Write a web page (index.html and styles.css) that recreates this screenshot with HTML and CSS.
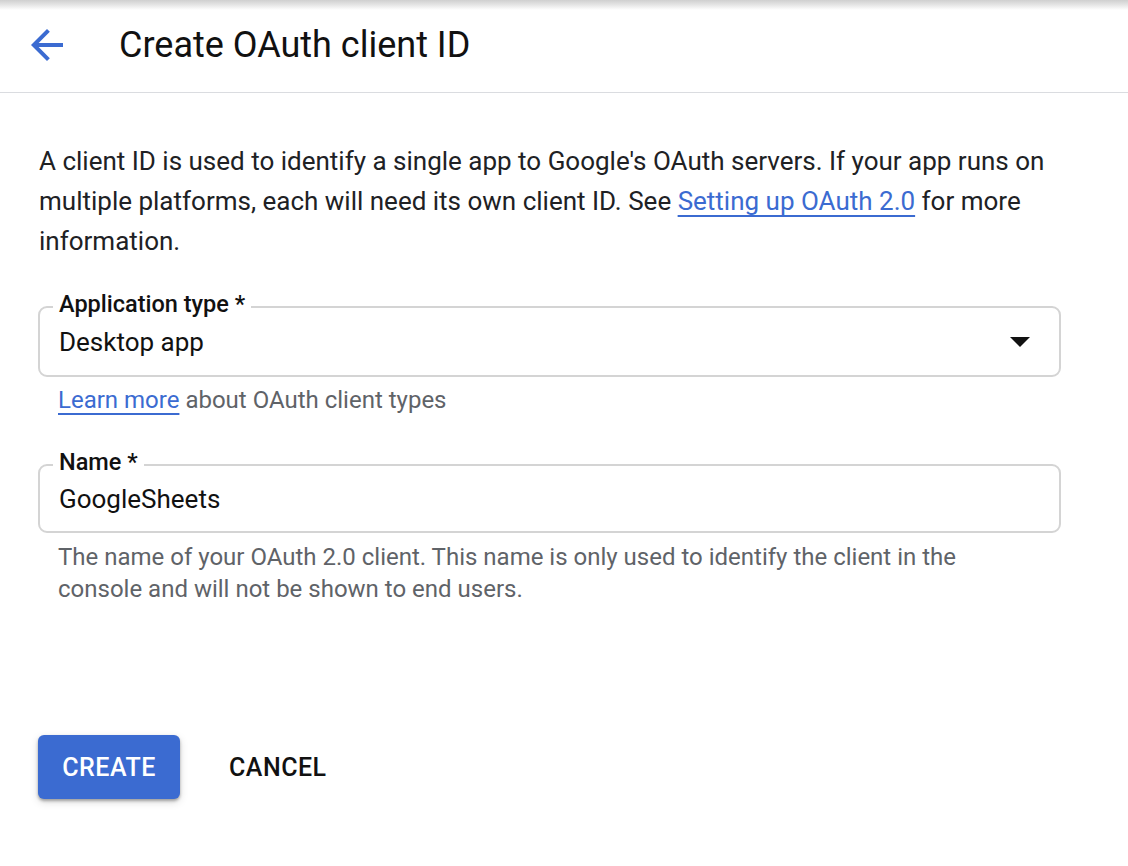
FILE: index.html
```html
<!DOCTYPE html>
<html lang="en">
<head>
<meta charset="utf-8">
<title>Create OAuth client ID</title>
<link rel="stylesheet" href="styles.css">
</head>
<body>
<div class="topshadow"></div>
<header class="header">
  <svg class="back" viewBox="0 0 24 24" width="48" height="48" aria-hidden="true"><path d="M20 11H7.83l5.59-5.59L12 4l-8 8 8 8 1.41-1.41L7.83 13H20v-2z"/></svg>
  <h1 class="title">Create OAuth client ID</h1>
</header>
<main class="content">
  <p class="intro">A client ID is used to identify a single app to Google's OAuth servers. If your app runs on multiple platforms, each will need its own client ID. See <a class="link" href="#">Setting up OAuth 2.0</a> for more information.</p>

  <div class="field field-select">
    <span class="label">Application type *</span>
    <span class="value">Desktop app</span>
    <span class="caret"></span>
  </div>
  <p class="hint hint-link"><a class="link" href="#">Learn more</a> about OAuth client types</p>

  <div class="field field-name">
    <span class="label">Name *</span>
    <span class="value">GoogleSheets</span>
  </div>
  <p class="hint hint-help">The name of your OAuth 2.0 client. This name is only used to identify the client in the console and will not be shown to end users.</p>

  <div class="actions">
    <button class="btn btn-primary">Create</button>
    <button class="btn btn-text">Cancel</button>
  </div>
</main>
</body>
</html>
```
FILE: styles.css
```css
* { box-sizing: border-box; }
html, body { margin: 0; padding: 0; background: #fff; }
body {
  font-family: Roboto, "Liberation Sans", Arial, sans-serif;
  color: #202124;
  width: 1128px;
  height: 866px;
  overflow: hidden;
}
.topshadow {
  height: 10px;
  background: linear-gradient(#cfcfcf, #e6e6e6 50%, #fff);
}
.header {
  height: 83px;
  border-bottom: 1px solid #dadce0;
  display: flex;
  align-items: center;
  padding-left: 23px;
}
.back {
  fill: #3b6bd1;
  margin-top: -12px;
  flex: none;
}
.title {
  margin: -12px 0 0 48px;
  font-size: 36px;
  font-weight: 400;
  color: #111;
}
.content {
  padding: 48px 67px 0 39px;
}
.intro {
  margin: 0;
  font-size: 26px;
  line-height: 40px;
  color: #202124;
}
.link {
  color: #3b6bd1;
  text-decoration: underline;
  text-underline-offset: 5px;
  text-decoration-thickness: 2px;
}
.field {
  position: relative;
  border: 2px solid #d4d4d4;
  border-radius: 9px;
  margin-left: -1px;
  display: flex;
  align-items: center;
  padding: 0 19px;
}
.field-select { margin-top: 45px; height: 71px; }
.field-name { margin-top: 50px; height: 69px; }
.label {
  position: absolute;
  left: 13px;
  top: -18px;
  padding: 0 6px;
  background: #fff;
  font-size: 23.5px;
  font-weight: 500;
  line-height: 28px;
  color: #111;
}
.value {
  font-size: 26px;
  color: #111;
  flex: 1;
}
.caret {
  width: 0;
  height: 0;
  border-left: 10px solid transparent;
  border-right: 10px solid transparent;
  border-top: 10px solid #111;
  margin-right: 10px;
}
.hint {
  margin: 0;
  font-size: 24px;
  color: #5f6368;
  padding-left: 19px;
}
.hint-link { margin-top: 9px; line-height: 28px; }
.hint-help { margin-top: 8px; line-height: 32px; padding-right: 40px; }
.actions {
  margin-top: 130px;
  display: flex;
  align-items: center;
  gap: 49px;
  margin-left: -1px;
}
.btn {
  font-family: Roboto, "Liberation Sans", Arial, sans-serif;
  font-size: 25px;
  font-weight: 500;
  text-transform: uppercase;
  letter-spacing: 0.5px;
  border: none;
  cursor: pointer;
}
.btn-primary {
  height: 64px;
  width: 142px;
  border-radius: 6px;
  background: #3b6bd1;
  color: #fff;
  box-shadow: 0 2px 3px rgba(0,0,0,0.3), 0 3px 8px rgba(0,0,0,0.15);
}
.btn-text {
  background: transparent;
  color: #111;
  padding: 0;
}
```
